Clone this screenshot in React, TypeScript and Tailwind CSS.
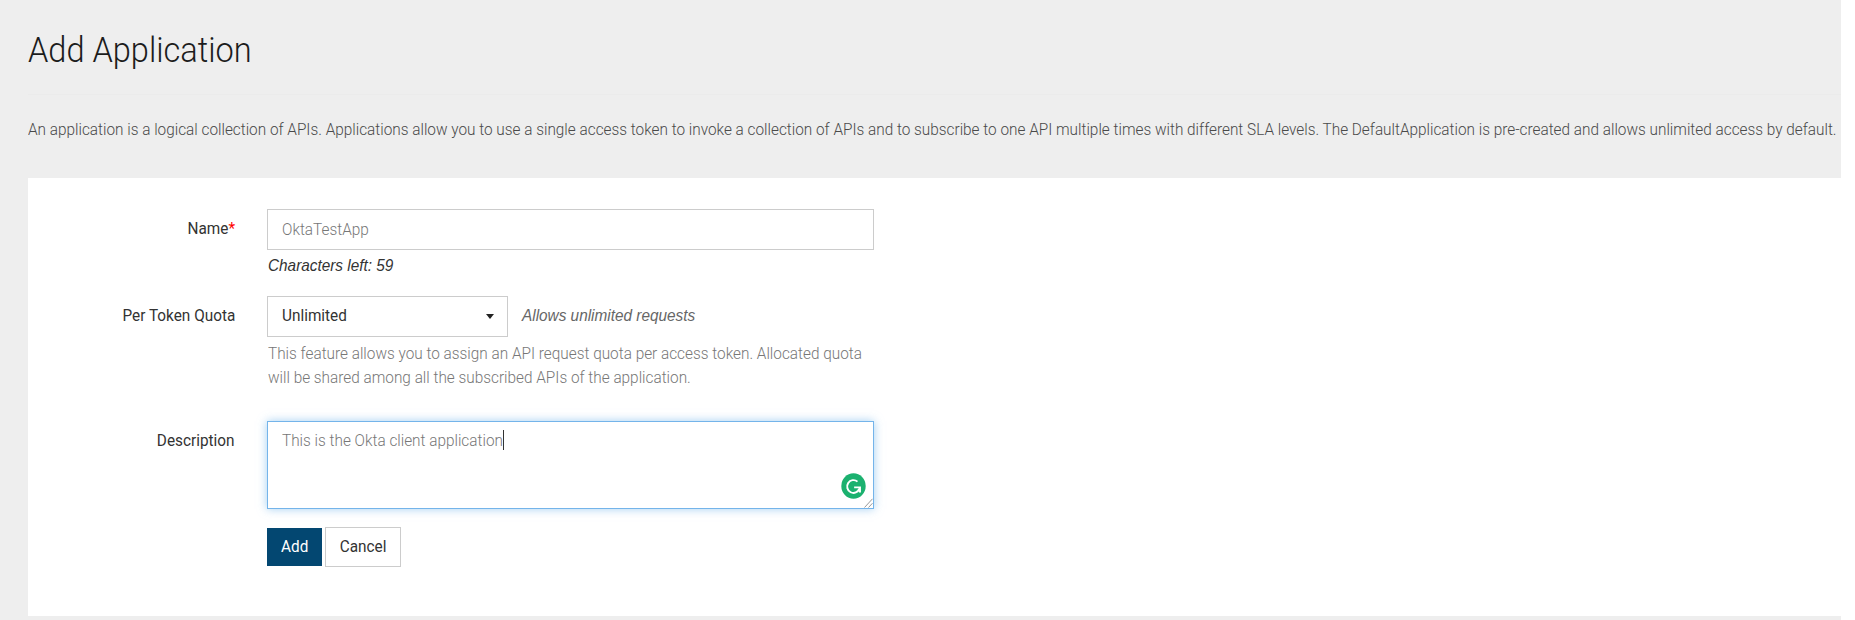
import type { ReactNode } from "react";

function Narrow({ children, className = "" }: { children: ReactNode; className?: string }) {
  return (
    <span className={`inline-block whitespace-nowrap scale-x-[0.93] ${className || "origin-left"}`}>
      {children}
    </span>
  );
}

function Label({ children, className }: { children: ReactNode; className: string }) {
  return (
    <label className={`w-[207px] shrink-0 text-right text-[#333] ${className}`}>
      <Narrow className="origin-right">{children}</Narrow>
    </label>
  );
}

function AssistantBadge() {
  return (
    <svg viewBox="0 0 24 26" preserveAspectRatio="none" className="absolute right-[7px] bottom-[9px] h-[26px] w-[25px]">
      <ellipse cx="12" cy="13" rx="11.7" ry="12.7" fill="#1bb16f" />
      <path d="M15.8 8.6A6 6.4 0 1 0 17.6 15.6" fill="none" stroke="#fff" strokeWidth="1.9" />
      <path d="M12.6 14.4h5.6v5" fill="none" stroke="#fff" strokeWidth="1.9" />
    </svg>
  );
}

function ResizeGrip() {
  return (
    <svg viewBox="0 0 9 10" className="absolute right-0 bottom-0 h-[10px] w-[9px]">
      <path d="M0.5 9.5L8.5 0.8M4.5 9.5L8.5 5.2" stroke="#999" strokeWidth="1" fill="none" />
    </svg>
  );
}

export default function App() {
  return (
    <div className="h-[620px] w-full overflow-hidden bg-white font-['Roboto','Liberation_Sans',sans-serif] text-[16.5px] leading-[24px]">
      <div className="h-full w-[1841px] bg-[#eee] pl-[28px]">
        <header className="h-[95px] border-b border-[#ebebeb] pt-[29px]">
          <h1 className="text-[35px] leading-[44px] font-light text-[#1c1c1c]">
            <Narrow>Add Application</Narrow>
          </h1>
        </header>
        <p className="h-[83px] pt-[23px] font-light text-[#4a4a4a]">
          <Narrow>
            An application is a logical collection of APIs. Applications allow you to use a single access token to invoke a collection of APIs and to subscribe to one API multiple times with different SLA levels. The DefaultApplication is pre-created and allows unlimited access by default.
          </Narrow>
        </p>

        <main className="h-[438px] bg-white pt-[31px]">
          <div className="flex h-[87px]">
            <Label className="pt-[8px]">
              Name<span className="text-[#f00]">*</span>
            </Label>
            <div className="ml-[32px] w-[607px]">
              <div className="h-[41px] border border-[#ccc] pt-[8px] pl-[14px] font-light text-[#777]">
                <Narrow>OktaTestApp</Narrow>
              </div>
              <div className="pt-[3px] pl-px font-['Liberation_Sans',sans-serif] text-[#333] italic">
                <Narrow>Characters left: 59</Narrow>
              </div>
            </div>
          </div>

          <div className="flex h-[125px]">
            <Label className="pt-[8px]">Per Token Quota</Label>
            <div className="ml-[32px] w-[607px]">
              <div className="flex">
                <div className="flex h-[41px] w-[241px] justify-between border border-[#ccc] pt-[7px] pr-[13px] pl-[14px] text-[#333]">
                  <Narrow>Unlimited</Narrow>
                  <svg viewBox="0 0 8 5" className="mt-[10px] h-[5px] w-[8px]">
                    <path d="M0 0h8L4 5z" fill="#222" />
                  </svg>
                </div>
                <div className="pt-[7px] pl-[14px] font-['Liberation_Sans',sans-serif] text-[#666] italic">
                  <Narrow>Allows unlimited requests</Narrow>
                </div>
              </div>
              <div className="pt-[5px] pl-px font-light text-[#777]">
                <Narrow>
                  This feature allows you to assign an API request quota per access token. Allocated quota
                  <br />
                  will be shared among all the subscribed APIs of the application.
                </Narrow>
              </div>
            </div>
          </div>

          <div className="flex h-[106px]">
            <Label className="pt-[8px]">Description</Label>
            <div className="relative ml-[32px] flex h-[88px] w-[607px] border border-[#74b4ea] pt-[7px] pl-[14px] font-light text-[#777] shadow-[0_0_9px_rgba(102,175,233,0.6)]">
              <Narrow>This is the Okta client application</Narrow>
              <span className="-ml-[17px] mt-px h-[20px] w-px bg-[#333]" />
              <AssistantBadge />
              <ResizeGrip />
            </div>
          </div>

          <div className="ml-[239px] flex gap-[3px]">
            <button className="mt-px h-[38px] w-[55px] bg-[#034771] text-white">
              <Narrow className="origin-center">Add</Narrow>
            </button>
            <button className="h-[40px] w-[76px] border border-[#ccc] bg-white text-[#333]">
              <Narrow className="origin-center">Cancel</Narrow>
            </button>
          </div>
        </main>
      </div>
    </div>
  );
}
